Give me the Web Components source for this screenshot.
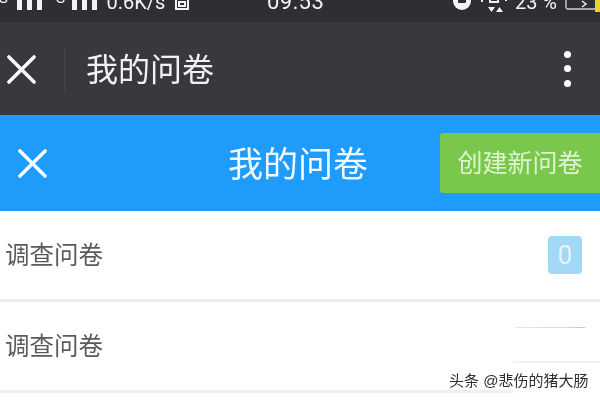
<!doctype html>
<html>
  <head>
    <style>
      html, body { margin: 0; height: 100%; background: #fff; overflow: hidden; }
      body { position: relative; font-family: "Liberation Sans", "Noto Sans CJK SC", sans-serif; filter: blur(.55px); }
    </style>
  </head>
  <body>
    <template id="status-bar">
      <style>
        :host { display: grid; grid-template-columns: 267px auto 1fr; height: 10px; padding-bottom: 12px; background: #2e2f33; color: #f2f2f2; font-family: Roboto, sans-serif; overflow: hidden; }
        .side { display: flex; align-items: flex-end; height: 10px; line-height: 16px; white-space: nowrap; }
        .right { justify-content: flex-end; }
        .sig { display: flex; gap: 5px; align-items: flex-end; height: 11px; }
        .sig i { display: block; width: 5px; height: 11px; background: #f2f2f2; }
        small { font-size: 15px; line-height: 16px; transform: translateY(-4px); }
        .speed { margin: 0 9px 0 9px; font-size: 20px; }
        .time { font-size: 22px; line-height: 16px; letter-spacing: .5px; }
        .dot { width: 18px; height: 18px; margin-right: 10px; }
        .net { width: 28px; height: 14px; margin-right: 6px; transform: translateY(2px); }
        .pct { font-size: 20px; margin-right: 8px; }
        .batt { width: 35px; height: 12px; transform: translateY(2px); }
      </style>
      <div class="side">
        <small style="margin-left:-2px;margin-right:9px">G</small><span class="sig"><i></i><i></i><i></i></span>
        <small style="margin:0 7px 0 13px">G</small><span class="sig"><i></i><i></i><i></i></span>
        <span class="speed">0.6K/s</span>
        <svg width="16" height="11" viewBox="0 0 16 11" fill="none" stroke="#f2f2f2" stroke-width="2"><path d="M2 0v10h12V0M5 3h6v4H5z"/></svg>
      </div>
      <div class="side"><span class="time">09:53</span></div>
      <div class="side right">
        <svg class="dot" viewBox="0 0 18 18"><circle cx="9" cy="9" r="9" fill="#f5f5f5"/><rect x="5" y="5" width="8" height="6" rx="1" fill="#2e2f33"/></svg>
        <svg class="net" viewBox="0 0 28 14" fill="#f2f2f2"><path d="M7 9h7l-3.5 5zM15 14h7l-3.5-5z"/><rect x="0" y="0" width="2" height="4"/><rect x="9" y="0" width="8" height="4" fill="none" stroke="#f2f2f2" stroke-width="2"/><rect x="24" y="0" width="2" height="3"/></svg>
        <span class="pct">23 %</span>
        <svg class="batt" viewBox="0 0 35 12"><rect x="1" y="-4" width="30" height="13" rx="2" fill="none" stroke="#cfcfcf" stroke-width="1.4"/><path d="M17 1l4 3-4 3" fill="none" stroke="#f2f2f2" stroke-width="1.5"/><rect x="30" y="0" width="5" height="12" fill="#f0d020"/></svg>
      </div>
    </template>

    <template id="close-icon">
      <style>
        :host { display: block; width: var(--size, 30px); height: var(--size, 30px); }
        svg { display: block; width: 100%; height: 100%; }
      </style>
      <svg viewBox="0 0 30 30" fill="none" stroke="#fff" stroke-width="3.6" stroke-linecap="round"><path d="M2 2l26 26M28 2L2 28"/></svg>
    </template>

    <template id="title-bar">
      <style>
        :host { display: flex; align-items: center; height: 93px; background: #38393e; color: #f1f1f1; font-size: 32px; }
        close-icon { --size: 29px; margin: 2px 0 0 7px; }
        .sep { width: 1px; height: 44px; margin: 2px 0 0 28px; background: #45464a; }
        .name { margin: 3px 0 0 21px; flex: 1; line-height: 1; }
        .more { display: flex; flex-direction: column; gap: 7.5px; margin-right: 29px; }
        .more i { display: block; width: 7px; height: 7px; border-radius: 50%; background: #fff; }
      </style>
      <close-icon></close-icon>
      <span class="sep"></span>
      <span class="name"><slot></slot></span>
      <span class="more"><i></i><i></i><i></i></span>
    </template>

    <template id="app-header">
      <style>
        :host { display: grid; grid-template-columns: 160px 1fr 160px; align-items: center; height: 96px; background: #1e9bfb; color: #f0f9ff; }
        close-icon { --size: 29px; margin-left: 18px; }
        .name { text-align: center; font-size: 35px; line-height: 38px; margin: 3px 4px 0 0; }
      </style>
      <close-icon></close-icon>
      <span class="name"><slot></slot></span>
      <slot name="action"></slot>
    </template>

    <template id="green-button">
      <style>
        :host { display: flex; align-items: center; justify-content: center; height: 60px; box-sizing: border-box; padding-bottom: 5px; border-radius: 3px 0 0 3px; background: #79c84c; color: #e2f3d2; font-size: 25px; }
      </style>
      <slot></slot>
    </template>

    <template id="survey-row">
      <style>
        :host { display: flex; align-items: center; justify-content: space-between; height: 88px; padding: 0 18px 0 5px; border-bottom: 3px solid #efefef; color: #5a5a5a; font-size: 24.5px; }
        .text { margin-top: -4px; }
        .count { display: flex; align-items: center; justify-content: center; width: 34px; height: 38px; margin-top: -1px; border-radius: 4px; background: #a3d8f6; color: #e6f5fd; font: 26px Roboto, sans-serif; }
      </style>
      <span class="text"><slot></slot></span>
      <span class="count"><slot name="count"></slot></span>
    </template>

    <template id="cover-patch">
      <style>
        :host { position: absolute; left: 513px; top: 327px; width: 87px; height: 73px; background: #fff; }
        .a { height: 1px; width: 70px; margin-left: 2px; background: linear-gradient(90deg, #e4e8ea, #cfe0ea 70%, #9fd0ee); }
        .b { height: 2px; margin-top: 33px; background: #f1f1f1; }
      </style>
      <div class="a"></div>
      <div class="b"></div>
    </template>

    <template id="water-mark">
      <style>
        :host { position: absolute; left: 449px; top: 372px; color: #2e2e2e; font-size: 15px; line-height: 18px; white-space: nowrap; }
      </style>
      <slot></slot>
    </template>

    <script>
      class BaseElement extends HTMLElement {
        constructor(templateId) {
          super();
          const root = this.attachShadow({mode: 'open'});
          root.appendChild(document.querySelector('#' + templateId).content.cloneNode(true));
        }
      }
      for (const id of ['status-bar', 'close-icon', 'title-bar', 'app-header', 'green-button', 'survey-row', 'cover-patch', 'water-mark']) {
        customElements.define(id, class extends BaseElement {
          constructor() { super(id); }
        });
      }
    </script>

    <status-bar></status-bar>
    <title-bar>我的问卷</title-bar>
    <app-header>我的问卷<green-button slot="action">创建新问卷</green-button></app-header>
    <survey-row>调查问卷<span slot="count">0</span></survey-row>
    <survey-row>调查问卷</survey-row>
    <cover-patch></cover-patch>
    <water-mark>头条 @悲伤的猪大肠</water-mark>
  </body>
</html>
